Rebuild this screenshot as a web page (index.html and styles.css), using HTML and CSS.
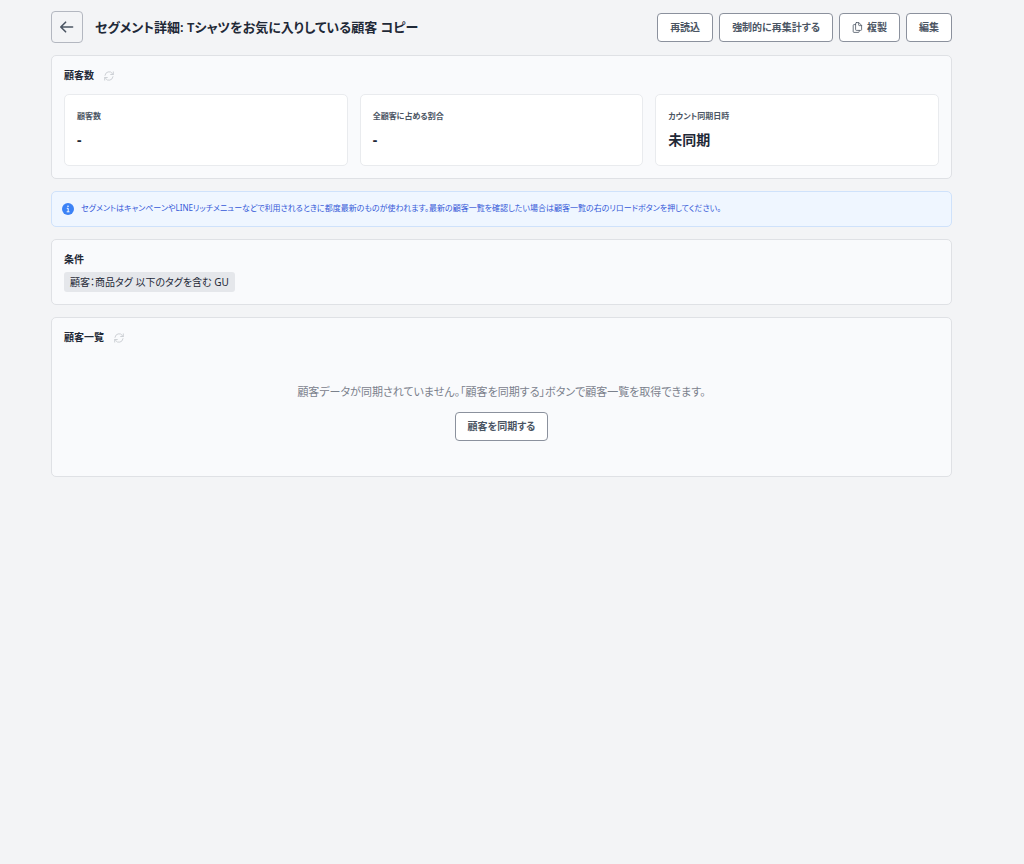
FILE: index.html
```html
<!DOCTYPE html>
<html lang="ja">

<head>
  <meta charset="UTF-8" />
  <meta name="viewport" content="width=device-width, initial-scale=1.0" />
  <title>セグメント詳細</title>
  <link rel="stylesheet" href="styles.css">
</head>

<body>
  <main class="page">
    <header class="page-header">
      <button type="button" class="back" aria-label="戻る">
        <svg width="16" height="16" viewBox="0 0 16 16" fill="none" stroke="currentColor" stroke-width="1.6" stroke-linecap="round" stroke-linejoin="round">
          <path d="M13.6 8H2M6.6 3.2L1.8 8l4.8 4.8" />
        </svg>
      </button>
      <h1>セグメント詳細: Tシャツをお気に入りしている顧客 コピー</h1>
      <div class="actions">
        <button type="button" class="btn">再読込</button>
        <button type="button" class="btn">強制的に再集計する</button>
        <button type="button" class="btn">
          <svg width="11" height="11" viewBox="0 0 11 11" fill="none" stroke="currentColor" stroke-width="0.8" stroke-linejoin="round" stroke-linecap="round">
            <path d="M4.4 .6h2.5L9.6 3.4v4.2a.8.8 0 0 1-.8.8H4.4a.8.8 0 0 1-.8-.8V1.4a.8.8 0 0 1 .8-.8z" />
            <path d="M6.7 .8v2.2a.6.6 0 0 0 .6.6h2.2M3.6 2.6H2a.8.8 0 0 0-.8.8v6.2a.8.8 0 0 0 .8.8h4.4a.8.8 0 0 0 .8-.8V8.6" />
          </svg>
          複製
        </button>
        <button type="button" class="btn">編集</button>
      </div>
    </header>

    <section class="card">
      <div class="card-head">
        <h2>顧客数</h2>
        <button type="button" class="reload" aria-label="顧客数を更新">
          <svg width="10" height="10" viewBox="0 0 10 10" fill="none" stroke="currentColor" stroke-width="1" stroke-linecap="round" stroke-linejoin="round">
            <path d="M1 4.3a4.1 4.1 0 0 1 7.4-1.8L9.3 3.5M9.3 .9v2.6H6.7" />
            <path d="M9 5.7a4.1 4.1 0 0 1-7.4 1.8L.7 6.5M.7 9.1V6.5h2.6" />
          </svg>
        </button>
      </div>
      <div class="stats">
        <div class="stat">
          <div class="stat-label">顧客数</div>
          <div class="stat-value">-</div>
        </div>
        <div class="stat">
          <div class="stat-label">全顧客に占める割合</div>
          <div class="stat-value">-</div>
        </div>
        <div class="stat">
          <div class="stat-label">カウント同期日時</div>
          <div class="stat-value">未同期</div>
        </div>
      </div>
    </section>

    <div class="notice">
      <svg width="12" height="12" viewBox="0 0 12 12">
        <circle cx="6" cy="6" r="6" fill="#3b82f6" />
        <circle cx="6" cy="3.3" r=".8" fill="#fff" />
        <path d="M4.8 5.3H6.2V8.7M4.7 8.8h2.8" fill="none" stroke="#fff" stroke-width="1" />
      </svg>
      <p>セグメントはキャンペーンやLINEリッチメニューなどで利用されるときに都度最新のものが使われます。最新の顧客一覧を確認したい場合は顧客一覧の右のリロードボタンを押してください。</p>
    </div>

    <section class="card">
      <h2>条件</h2>
      <div class="tag">顧客：商品タグ 以下のタグを含む GU</div>
    </section>

    <section class="card">
      <div class="card-head">
        <h2>顧客一覧</h2>
        <button type="button" class="reload" aria-label="顧客一覧を更新">
          <svg width="10" height="10" viewBox="0 0 10 10" fill="none" stroke="currentColor" stroke-width="1" stroke-linecap="round" stroke-linejoin="round">
            <path d="M1 4.3a4.1 4.1 0 0 1 7.4-1.8L9.3 3.5M9.3 .9v2.6H6.7" />
            <path d="M9 5.7a4.1 4.1 0 0 1-7.4 1.8L.7 6.5M.7 9.1V6.5h2.6" />
          </svg>
        </button>
      </div>
      <div class="empty">
        <p>顧客データが同期されていません。「顧客を同期する」ボタンで顧客一覧を取得できます。</p>
        <button type="button" class="btn">顧客を同期する</button>
      </div>
    </section>
  </main>
</body>

</html>
```
FILE: styles.css
```css
* {
  box-sizing: border-box;
}

body {
  margin: 0;
  background-color: #f3f4f6;
  color: #1f2937;
  font-family: "Noto Sans", "Noto Sans CJK JP", sans-serif;
  font-feature-settings: "palt";
  font-size: 10px;
  line-height: 15px;
}

h1,
h2,
p {
  margin: 0;
}

button {
  font: inherit;
  font-feature-settings: inherit;
  cursor: pointer;
}

svg {
  flex: none;
}

.page {
  display: flex;
  flex-direction: column;
  gap: 12px;
  padding: 11px 72px 24px 51px;
}

.page-header {
  display: flex;
  align-items: center;
  gap: 12px;
}

.page-header h1 {
  flex: 1;
  font-size: 13px;
  font-weight: 600;
  line-height: 20px;
}

.back {
  display: flex;
  align-items: center;
  justify-content: center;
  width: 32px;
  height: 32px;
  padding: 0;
  color: #4b5563;
  background-color: transparent;
  border: 1px solid #b3b7c0;
  border-radius: 4px;
}

.actions {
  display: flex;
  gap: 6px;
}

.btn {
  display: flex;
  align-items: center;
  gap: 4px;
  padding: 6px 12px;
  font-weight: 600;
  color: #4b5563;
  background-color: #fff;
  border: 1px solid #8b919d;
  border-radius: 4px;
}

.btn:hover {
  background-color: #f9fafb;
}

.card {
  padding: 12px;
  background-color: #f9fafc;
  border: 1px solid #dfe1e5;
  border-radius: 5px;
}

.card h2 {
  font-size: 10px;
  font-weight: 700;
  line-height: 15px;
}

.card-head {
  display: flex;
  align-items: center;
  gap: 10px;
}

.reload {
  display: flex;
  padding: 0;
  color: #cdd0d5;
  background: none;
  border: none;
}

.stats {
  display: grid;
  grid-template-columns: repeat(3, 1fr);
  gap: 12px;
  margin-top: 11px;
}

.stat {
  padding: 12px 12px 13px;
  background-color: #fff;
  border: 1px solid #e9ebee;
  border-radius: 5px;
}

.stat-label {
  margin-bottom: 3px;
  font-size: 8px;
  font-weight: 600;
  line-height: 18px;
  color: #4b5563;
}

.stat-value {
  font-size: 14px;
  font-weight: 700;
  line-height: 24px;
}

.notice {
  display: flex;
  align-items: center;
  gap: 7px;
  padding: 8px 10px;
  color: #3459d8;
  background-color: #eff6ff;
  border: 1px solid #cfe2fb;
  border-radius: 5px;
  font-size: 8px;
}

.notice p {
  padding-bottom: 3px;
}

.tag {
  width: fit-content;
  margin-top: 5px;
  padding: 2px 6px;
  line-height: 16px;
  background-color: #e5e7eb;
  border-radius: 3px;
}

.empty {
  display: flex;
  flex-direction: column;
  align-items: center;
  gap: 12px;
  padding: 39px 0 23px;
  color: #7b818c;
}

.empty p {
  font-size: 11px;
  line-height: 16px;
}
```
